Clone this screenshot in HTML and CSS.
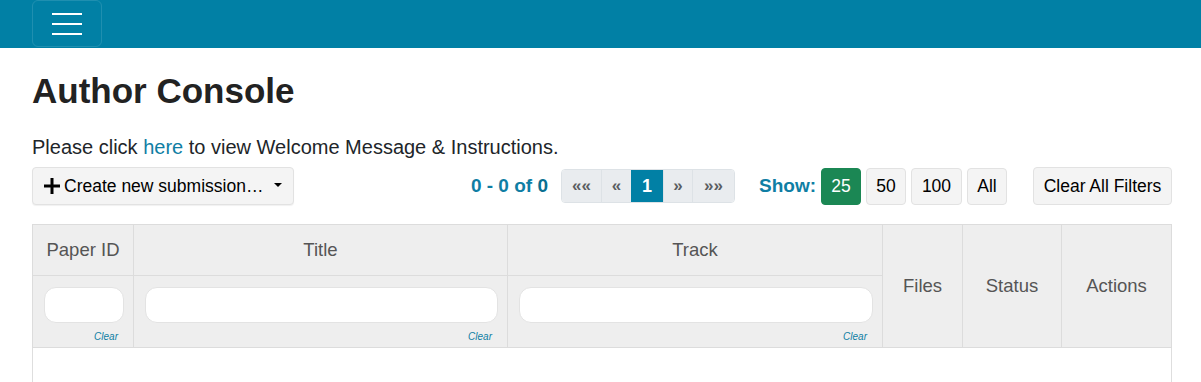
FILE: index.html
```html
<!DOCTYPE html>
<html lang="en">
  <head>
    <meta charset="UTF-8" />
    <meta name="viewport" content="width=device-width, initial-scale=1.0" />
    <title>Author Console</title>
    <link rel="stylesheet" href="styles.css">
  </head>
  <body>
    <nav class="topbar">
      <button class="menu-toggle" type="button" aria-label="Menu">
        <span></span><span></span><span></span>
      </button>
    </nav>

    <main class="page">
      <h1 class="page-title">Author Console</h1>
      <p class="intro">Please click <a href="#">here</a> to view Welcome Message &amp; Instructions.</p>

      <div class="toolbar">
        <button class="btn create-btn" type="button">
          <svg class="plus" width="16" height="16" viewBox="0 0 16 16" aria-hidden="true">
            <path d="M6.5 0h3v6.5H16v3H9.5V16h-3V9.5H0v-3h6.5z" fill="#000" />
          </svg>
          <span class="create-label">Create new submission&hellip;</span>
          <span class="caret"></span>
        </button>

        <div class="paging">
          <span class="count">0 - 0 of <b>0</b></span>
          <ul class="pager">
            <li>&laquo;&laquo;</li>
            <li>&laquo;</li>
            <li class="active">1</li>
            <li>&raquo;</li>
            <li>&raquo;&raquo;</li>
          </ul>
          <span class="show-label">Show:</span>
          <div class="page-sizes">
            <button class="btn size active" type="button">25</button>
            <button class="btn size" type="button">50</button>
            <button class="btn size wide" type="button">100</button>
            <button class="btn size" type="button">All</button>
          </div>
          <button class="btn clear-all" type="button">Clear All Filters</button>
        </div>
      </div>

      <table class="papers">
        <thead>
          <tr>
            <th class="col-id">Paper ID</th>
            <th class="col-title">Title</th>
            <th class="col-track">Track</th>
            <th class="col-files" rowspan="2">Files</th>
            <th class="col-status" rowspan="2">Status</th>
            <th class="col-actions" rowspan="2">Actions</th>
          </tr>
          <tr class="filters">
            <th><input type="text" /><a class="clear" href="#">Clear</a></th>
            <th><input type="text" /><a class="clear" href="#">Clear</a></th>
            <th><input type="text" /><a class="clear" href="#">Clear</a></th>
          </tr>
        </thead>
        <tbody>
          <tr class="empty"><td colspan="6"></td></tr>
        </tbody>
      </table>
    </main>
  </body>
</html>
```

FILE: styles.css
```css
body {
  margin: 0;
  font-family: "Liberation Sans", Arial, sans-serif;
  color: #212529;
  background-color: #fff;
}

.topbar {
  background-color: #0180a5;
  height: 48px;
  padding: 0 32px;
  display: flex;
  align-items: stretch;
}

.menu-toggle {
  width: 70px;
  height: 47px;
  background: transparent;
  border: 1px solid rgba(255, 255, 255, 0.12);
  border-radius: 6px;
  display: flex;
  flex-direction: column;
  align-items: center;
  justify-content: center;
  gap: 8px;
  padding: 0;
}

.menu-toggle span {
  display: block;
  width: 30px;
  height: 2px;
  background-color: #fff;
}

.page {
  padding: 0 29px 0 32px;
}

.page-title {
  font-size: 35px;
  font-weight: bold;
  margin: 0;
  padding-top: 23px;
  line-height: 40px;
  color: #222;
}

.intro {
  font-size: 20px;
  margin: 24px 0 0;
  line-height: 24px;
}

.intro a {
  color: #0f7ea4;
  text-decoration: none;
}

.toolbar {
  display: flex;
  align-items: center;
  justify-content: space-between;
  margin-top: 8px;
}

.btn {
  font-family: "Liberation Sans", Arial, sans-serif;
  font-size: 17.5px;
  color: #000;
  background-color: #f4f4f4;
  border: 1px solid #e2e2e2;
  border-radius: 4px;
  height: 38px;
  padding: 0 10px;
  cursor: pointer;
  white-space: nowrap;
}

.create-btn {
  display: flex;
  align-items: center;
  padding: 0 11px 0 11px;
  box-shadow: 0 1px 1px rgba(0, 0, 0, 0.06);
}

.plus {
  display: block;
  margin-right: 4px;
}

.create-label {
  font-size: 17.5px;
}

.caret {
  display: inline-block;
  width: 0;
  height: 0;
  border-left: 4.5px solid transparent;
  border-right: 4.5px solid transparent;
  border-top: 4.5px solid #000;
  margin-left: 11px;
  margin-top: -3px;
}

.paging {
  display: flex;
  align-items: center;
}

.count {
  font-size: 19px;
  font-weight: bold;
  color: #0f7ea4;
  margin-right: 13px;
}

.count b {
  color: #0a6f91;
}

.pager {
  list-style: none;
  margin: 0;
  padding: 0;
  display: flex;
  border: 1px solid #dde2e6;
  border-radius: 4px;
  overflow: hidden;
  height: 32px;
}

.pager li {
  background-color: #e9ecef;
  color: #5a5d61;
  font-size: 17px;
  font-weight: bold;
  display: flex;
  align-items: center;
  justify-content: center;
  border-left: 1px solid #dde2e6;
}

.pager li:first-child {
  border-left: none;
  width: 39px;
}

.pager li:nth-child(2) {
  width: 29px;
}

.pager li:nth-child(4) {
  width: 28px;
}

.pager li:nth-child(5) {
  width: 41px;
}

.pager li.active {
  background-color: #0180a5;
  color: #fff;
  font-size: 18px;
  width: 32px;
  border-left: none;
}

.show-label {
  font-size: 19px;
  font-weight: bold;
  color: #0f7ea4;
  margin-left: 24px;
  margin-right: 5px;
}

.page-sizes {
  display: flex;
  gap: 5px;
}

.size {
  height: 37px;
  width: 40px;
  padding: 0;
}

.size.wide {
  width: 51px;
}

.size.active {
  background-color: #1b8754;
  border-color: #1b8754;
  color: #fff;
}

.clear-all {
  margin-left: 26px;
  width: 139px;
  padding: 0;
}

.papers {
  width: 100%;
  margin-top: 19px;
  border-collapse: collapse;
  border: 1px solid #dedede;
}

.papers th {
  background-color: #eee;
  color: #555;
  font-weight: normal;
  font-size: 18.5px;
  border: 1px solid #dcdcdc;
  height: 50px;
  padding: 0;
}

.col-id { width: 100px; }
.col-title { width: 373px; }
.col-track { width: 374px; }
.col-files { width: 79px; }
.col-status { width: 98px; }

.papers .filters th {
  height: 71px;
  padding: 0 9px 0 11px;
  text-align: right;
  vertical-align: top;
}

.filters input {
  display: block;
  box-sizing: border-box;
  width: 100%;
  height: 36px;
  margin-top: 11px;
  border: 1px solid #e3e3e3;
  border-radius: 12px;
  background-color: #fff;
}

.clear {
  display: inline-block;
  font-size: 10px;
  font-style: italic;
  color: #0f7ea4;
  text-decoration: none;
  margin-top: 4px;
  margin-right: 6px;
}

.papers .empty td {
  height: 40px;
  border: 1px solid #dedede;
  border-top: none;
}
```
